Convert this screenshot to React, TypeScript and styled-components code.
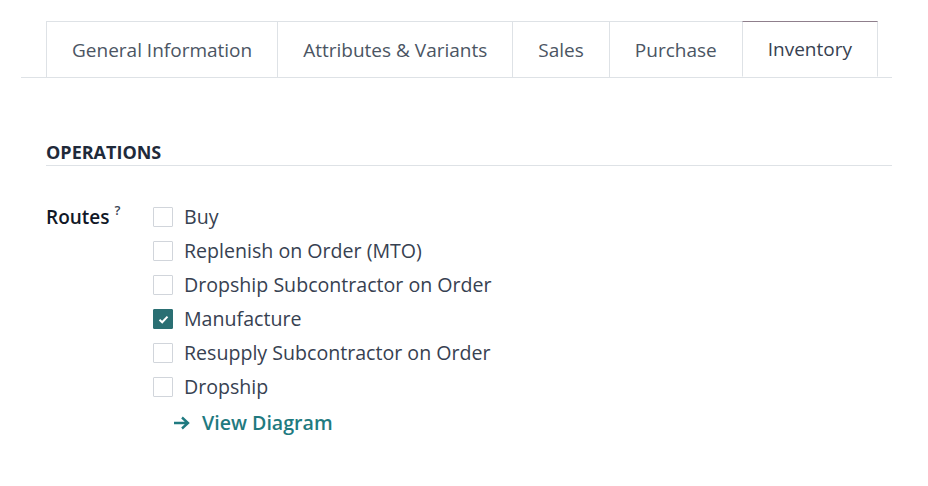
import React from "react";
import styled, { createGlobalStyle } from "styled-components";

const Global = createGlobalStyle`
  html, body { margin: 0; padding: 0; background: #fff; }
  body { font-family: "Open Sans", "Noto Sans", sans-serif; }
`;

const Page = styled.div`
  width: 928px;
  height: 486px;
  padding: 21px 36px 0 21px;
  box-sizing: border-box;
  background: #fff;
`;

const TabBar = styled.div`
  display: flex;
  padding-left: 25px;
  border-bottom: 1px solid #dee2e6;
  height: 56px;
`;

const Tab = styled.div<{ $active?: boolean }>`
  display: flex;
  align-items: center;
  padding: 0 25px;
  height: 56px;
  box-sizing: border-box;
  font-size: 19px;
  color: ${(p) => (p.$active ? "#374151" : "#4b5563")};
  background: #fff;
  border: 1px solid #dee2e6;
  border-top-color: ${(p) => (p.$active ? "#8f7f8c" : "#dee2e6")};
  border-bottom: ${(p) => (p.$active ? "1px solid #fff" : "none")};
  margin-left: -1px;
  position: relative;
  z-index: ${(p) => (p.$active ? 1 : 0)};
  &:first-child { margin-left: 0; }
`;

const Section = styled.div`
  padding: 0 0 0 25px;
`;

const SectionTitle = styled.div`
  margin-top: 63px;
  font-size: 18px;
  line-height: 22px;
  font-weight: 700;
  color: #1f2a3a;
  padding-bottom: 2px;
  border-bottom: 1px solid #dee2e6;
`;

const FieldRow = styled.div`
  display: flex;
  margin-top: 38px;
`;

const Label = styled.div`
  width: 107px;
  font-size: 19px;
  font-weight: 600;
  color: #111827;
  line-height: 26px;
  sup {
    font-size: 13px;
    font-weight: 600;
    color: #3b4554;
    margin-left: 5px;
    vertical-align: 9px;
    line-height: 0;
  }
`;

const List = styled.div`
  display: flex;
  flex-direction: column;
  gap: 8px;
`;

const Item = styled.label`
  display: flex;
  align-items: center;
  gap: 11px;
  font-size: 19.6px;
  line-height: 26px;
  color: #374151;
`;

const Box = styled.span<{ $checked?: boolean }>`
  width: 20px;
  height: 20px;
  box-sizing: border-box;
  border: 1px solid ${(p) => (p.$checked ? "#2a6f73" : "#d1d5db")};
  background: ${(p) => (p.$checked ? "#2a6f73" : "#fff")};
  border-radius: 1px;
  display: flex;
  align-items: center;
  justify-content: center;
`;

const DiagramLink = styled.a`
  display: flex;
  align-items: center;
  gap: 12px;
  margin-left: 20px;
  margin-top: 2px;
  font-size: 19.6px;
  font-weight: 600;
  color: #1f7a80;
  text-decoration: none;
  line-height: 26px;
`;

const routes = [
  { name: "Buy", checked: false },
  { name: "Replenish on Order (MTO)", checked: false },
  { name: "Dropship Subcontractor on Order", checked: false },
  { name: "Manufacture", checked: true },
  { name: "Resupply Subcontractor on Order", checked: false },
  { name: "Dropship", checked: false },
];

const tabs = ["General Information", "Attributes & Variants", "Sales", "Purchase", "Inventory"];

export default function App() {
  return (
    <>
      <Global />
      <Page>
        <TabBar>
          {tabs.map((t) => (
            <Tab key={t} $active={t === "Inventory"}>
              {t}
            </Tab>
          ))}
        </TabBar>
        <Section>
          <SectionTitle>OPERATIONS</SectionTitle>
          <FieldRow>
            <Label>
              Routes<sup>?</sup>
            </Label>
            <List>
              {routes.map((r) => (
                <Item key={r.name}>
                  <Box $checked={r.checked}>
                    {r.checked && (
                      <svg width="11" height="9" viewBox="0 0 11 9">
                        <path d="M1.5 4.8 L4.2 7.3 L9.5 1.6" stroke="#fff" strokeWidth="2" fill="none" />
                      </svg>
                    )}
                  </Box>
                  {r.name}
                </Item>
              ))}
              <DiagramLink href="#">
                <svg width="17" height="14" viewBox="0 0 17 14">
                  <path d="M1 7 H15 M9 1.5 L15 7 L9 12.5" stroke="#1f7a80" strokeWidth="2.4" fill="none" />
                </svg>
                View Diagram
              </DiagramLink>
            </List>
          </FieldRow>
        </Section>
      </Page>
    </>
  );
}
